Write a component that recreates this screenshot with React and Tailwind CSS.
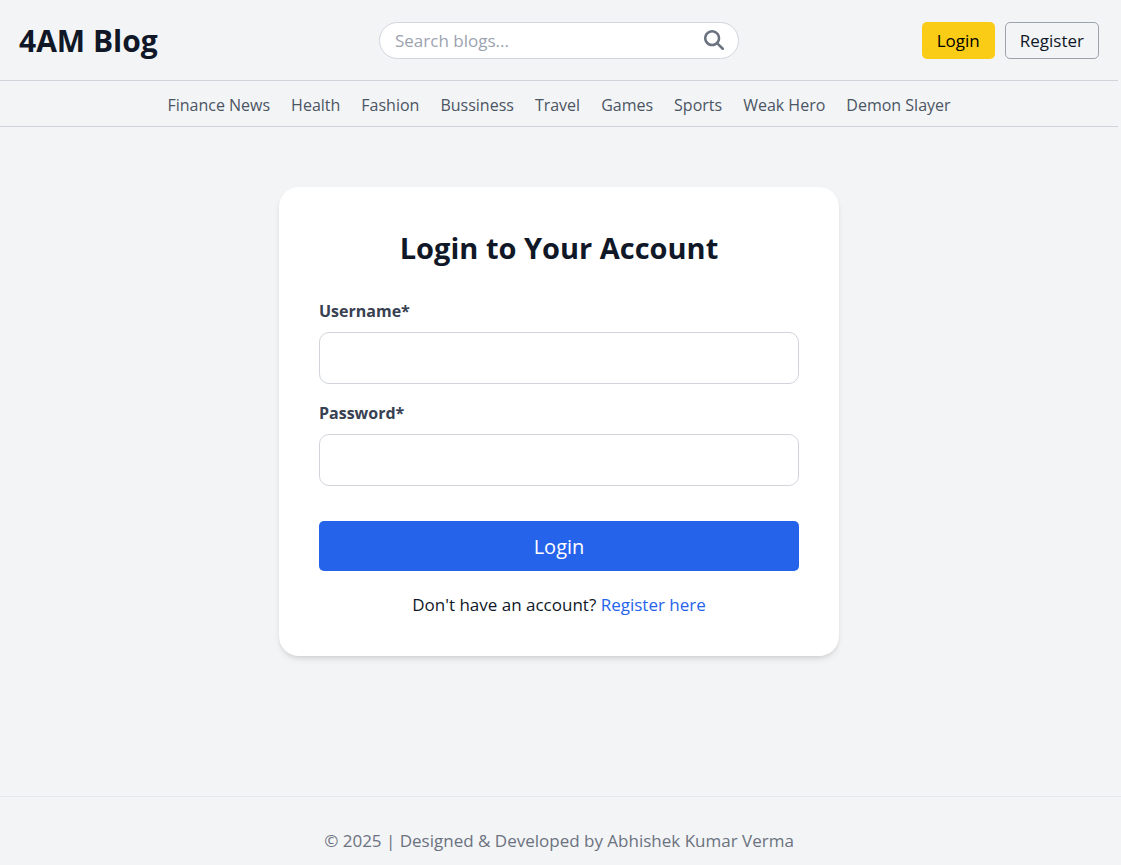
import { FaMagnifyingGlass } from "react-icons/fa6";

const categories = [
  "Finance News",
  "Health",
  "Fashion",
  "Bussiness",
  "Travel",
  "Games",
  "Sports",
  "Weak Hero",
  "Demon Slayer",
];

function Header() {
  return (
    <header>
      <div className="grid h-20 grid-cols-[1fr_360px_1fr] items-center px-[19px]">
        <a href="#home" className="pt-[2px] text-[30px] leading-10 font-bold text-gray-900">
          4AM Blog
        </a>
        <form
          role="search"
          className="flex h-[37px] items-center rounded-full border border-gray-300 bg-white pr-[14px] pl-[15px]"
        >
          <input
            type="search"
            aria-label="Search blogs"
            placeholder="Search blogs..."
            className="min-w-0 flex-1 bg-transparent pt-[2px] outline-none placeholder:text-[#9ca3af]"
          />
          <button type="button" aria-label="Search" className="text-[#6b7280]">
            <FaMagnifyingGlass size={20} />
          </button>
        </form>
        <div className="flex justify-end gap-[10px]">
          <a
            href="#login"
            className="flex h-[37px] items-center rounded-[5px] bg-[#facc15] px-[15px] pt-[2px] text-black"
          >
            Login
          </a>
          <a
            href="#register"
            className="flex h-[37px] items-center rounded-[5px] border border-[#9ca3af] px-[14px] pt-[2px] text-gray-900"
          >
            Register
          </a>
        </div>
      </div>
      <nav
        aria-label="Categories"
        className="flex h-[47px] items-center justify-center gap-[21px] border-y border-[#d1d5db] pt-[2px] text-[16px] text-[#4b5563]"
      >
        {categories.map((name) => (
          <a key={name} href="#category" className="whitespace-nowrap">
            {name}
          </a>
        ))}
      </nav>
    </header>
  );
}

function Field({ id, label, type }) {
  return (
    <div className="mb-4">
      <label htmlFor={id} className="mb-2 block text-[16px] leading-[26px] font-bold text-[#374151]">
        {label}
      </label>
      <input
        id={id}
        type={type}
        className="block h-[52px] w-full rounded-[10px] border border-[#d1d5db] bg-white px-4 outline-none"
      />
    </div>
  );
}

export default function App() {
  return (
    <div className="flex min-h-screen flex-col bg-[#f3f4f6] font-['Open_Sans','Noto_Sans',sans-serif] text-[17px] text-gray-900">
      <div className="flex flex-1 flex-col pr-[3px]">
        <Header />
        <main className="flex justify-center px-5 py-[60px]">
          <section className="w-full max-w-[560px] rounded-[20px] bg-white px-10 pt-10 pb-[39px] shadow-md">
            <h1 className="mb-[30px] text-center text-[29px] leading-[41px] font-bold">
              Login to Your Account
            </h1>
            <form>
              <Field id="username" label="Username*" type="text" />
              <Field id="password" label="Password*" type="password" />
              <button
                type="button"
                className="mt-[35px] block h-[50px] w-full rounded-[5px] bg-[#2563eb] pt-[2px] text-[20px] text-white"
              >
                Login
              </button>
            </form>
            <p className="mt-[22px] text-center leading-6">
              Don't have an account?{" "}
              <a href="#register" className="text-[#2563eb]">
                Register here
              </a>
            </p>
          </section>
        </main>
      </div>
      <footer className="border-t border-[#e5e7eb] pt-[31px] pr-[3px] pb-[11px] text-center leading-[26px] text-[#6b7280]">
        © 2025 | Designed &amp; Developed by Abhishek Kumar Verma
      </footer>
    </div>
  );
}
